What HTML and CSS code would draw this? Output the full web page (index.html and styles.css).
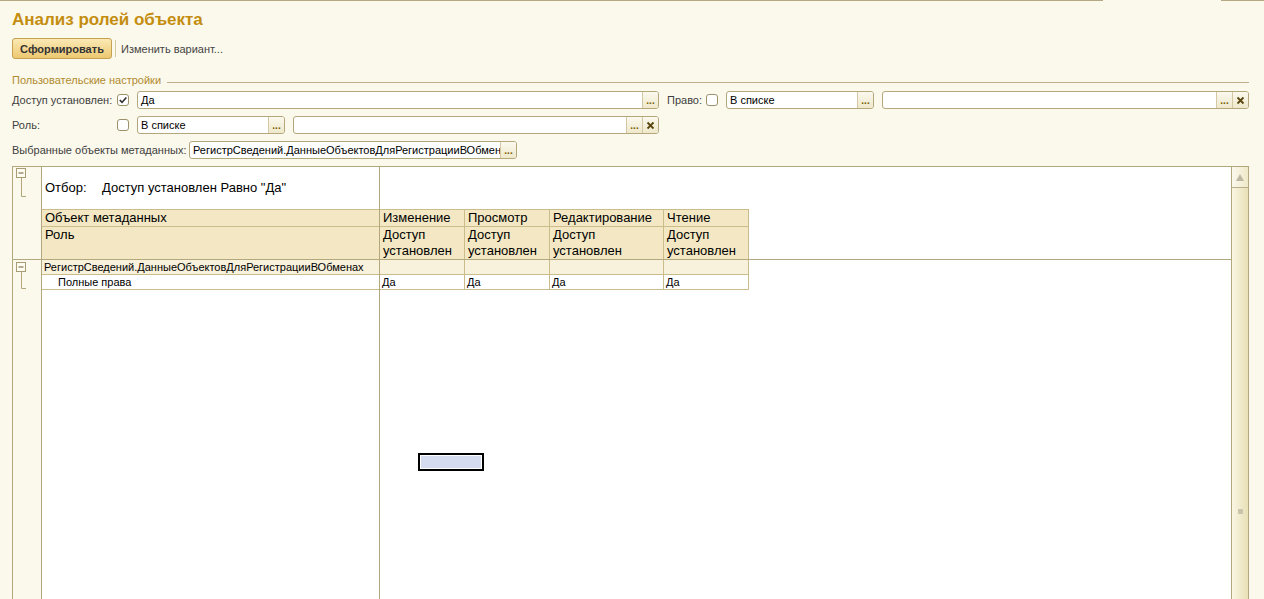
FILE: index.html
```html
<!DOCTYPE html>
<html lang="ru">
<head>
    <meta charset="UTF-8">
    <title>Анализ ролей объекта</title>
    <link rel="stylesheet" href="styles.css">
</head>
<body>
    <!-- window top edge -->
    <div class="topline"><span class="tl-left"></span><span class="tl-right"></span></div>

    <div class="page">
        <h1 class="title">Анализ ролей объекта</h1>

        <!-- Command bar -->
        <div class="toolbar">
            <button class="btn-main">Сформировать</button>
            <span class="tb-sep"></span>
            <span class="tb-link">Изменить вариант...</span>
        </div>

        <!-- User settings -->
        <div class="group-head">
            <span class="group-title">Пользовательские настройки</span>
            <span class="group-line"></span>
        </div>

        <div class="frow">
            <span class="flabel">Доступ установлен:</span>
            <span class="check"><svg width="10" height="10" viewBox="0 0 10 10"><path d="M1.8 5 L4 7.4 L8.3 2.4" fill="none" stroke="#2e2e2e" stroke-width="1.6"/></svg></span>
            <div class="field w-access"><span class="val">Да</span><span class="fbtn">...</span></div>
            <span class="flabel-right">Право:</span>
            <span class="check"></span>
            <div class="field w-list"><span class="val">В списке</span><span class="fbtn">...</span></div>
            <div class="field grow"><span class="val"></span><span class="fbtn">...</span><span class="fbtn clr"><svg width="9" height="9" viewBox="0 0 9 9"><path d="M1.5 1.5 L7.5 7.5 M7.5 1.5 L1.5 7.5" stroke="#5a470f" stroke-width="1.8"/></svg></span></div>
        </div>

        <div class="frow">
            <span class="flabel">Роль:</span>
            <span class="check"></span>
            <div class="field w-list"><span class="val">В списке</span><span class="fbtn">...</span></div>
            <div class="field w-role"><span class="val"></span><span class="fbtn">...</span><span class="fbtn clr"><svg width="9" height="9" viewBox="0 0 9 9"><path d="M1.5 1.5 L7.5 7.5 M7.5 1.5 L1.5 7.5" stroke="#5a470f" stroke-width="1.8"/></svg></span></div>
        </div>

        <div class="frow">
            <span class="flabel-meta">Выбранные объекты метаданных:</span>
            <div class="field w-meta"><span class="val">РегистрСведений.ДанныеОбъектовДляРегистрацииВОбменах</span><span class="fbtn">...</span></div>
        </div>

        <!-- Report spreadsheet -->
        <div class="report">
            <div class="gutter">
                <div class="gutter-top">
                    <svg width="28" height="32" viewBox="0 0 28 32">
                        <path d="M8.5 11 V29.5 H13" fill="none" stroke="#b3a77e"/>
                        <rect x="3.5" y="1.5" width="9" height="9" fill="#fdfbf2" stroke="#a89c74"/>
                        <path d="M5.5 6 H10.5" stroke="#6b5c2c"/>
                    </svg>
                </div>
                <div class="gutter-bottom">
                    <svg width="28" height="32" viewBox="0 0 28 32">
                        <path d="M8.5 12 V28.5 H13" fill="none" stroke="#b3a77e"/>
                        <rect x="3.5" y="2.5" width="9" height="9" fill="#fdfbf2" stroke="#a89c74"/>
                        <path d="M5.5 7 H10.5" stroke="#6b5c2c"/>
                    </svg>
                </div>
            </div>

            <div class="sheet">
                <div class="pane pane-tl">
                    <div class="filter"><span class="filter-key">Отбор:</span><span>Доступ установлен Равно "Да"</span></div>
                    <div class="hcell h1">Объект метаданных</div>
                    <div class="hcell h2">Роль</div>
                </div>
                <div class="pane pane-tr">
                    <div class="hrow h1">
                        <div class="hc">Изменение</div>
                        <div class="hc">Просмотр</div>
                        <div class="hc wide">Редактирование</div>
                        <div class="hc">Чтение</div>
                    </div>
                    <div class="hrow h2">
                        <div class="hc">Доступ<br>установлен</div>
                        <div class="hc">Доступ<br>установлен</div>
                        <div class="hc wide">Доступ<br>установлен</div>
                        <div class="hc">Доступ<br>установлен</div>
                    </div>
                </div>
                <div class="pane pane-bl">
                    <div class="drow grp">РегистрСведений.ДанныеОбъектовДляРегистрацииВОбменах</div>
                    <div class="drow det">Полные права</div>
                </div>
                <div class="pane pane-br">
                    <div class="crow grp">
                        <div class="dc"></div>
                        <div class="dc"></div>
                        <div class="dc wide"></div>
                        <div class="dc"></div>
                    </div>
                    <div class="crow">
                        <div class="dc">Да</div>
                        <div class="dc">Да</div>
                        <div class="dc wide">Да</div>
                        <div class="dc">Да</div>
                    </div>
                    <!-- current cell -->
                    <div class="cursor"></div>
                </div>
            </div>

            <div class="vscroll">
                <div class="sb-up"><svg width="8" height="7" viewBox="0 0 8 7"><path d="M4 0 L8 7 H0 Z" fill="#bdb8a2"/></svg></div>
                <div class="sb-grip"></div>
            </div>
        </div>
    </div>
</body>
</html>
```

FILE: styles.css
```css
/* Basic Reset */
* {
    margin: 0;
    padding: 0;
    box-sizing: border-box;
}

body {
    background: #fbf9eb;
    font-family: "Liberation Sans", Arial, sans-serif;
    font-size: 11px;
    color: #404040;
    height: 599px;
    overflow: hidden;
}

/* Window top edge */
.topline {
    display: flex;
    height: 1px;
}

.topline .tl-left {
    width: 1103px;
    background: #b5a983;
}

.topline .tl-right {
    flex: 1;
    margin-left: 118px;
    background: #b5a983;
}

.page {
    padding: 0 15px 0 12px;
}

/* Title */
.title {
    margin-top: 9px;
    font-size: 17px;
    line-height: 20px;
    font-weight: bold;
    color: #c48d10;
}

/* Command bar */
.toolbar {
    display: flex;
    align-items: center;
    height: 21px;
    margin-top: 8px;
}

.btn-main {
    width: 100px;
    height: 21px;
    border: 1px solid #c6a14f;
    border-radius: 3px;
    background: linear-gradient(#fbe9b5, #edc871);
    font: bold 11px "Liberation Sans", Arial, sans-serif;
    color: #333;
}

.tb-sep {
    width: 1px;
    height: 17px;
    margin: 0 5px 0 3px;
    background: #d4c9a2;
}

.tb-link {
    color: #444;
}

/* Settings group */
.group-head {
    display: flex;
    height: 14px;
    margin-top: 14px;
    line-height: 14px;
}

.group-title {
    color: #b08a30;
    margin-right: 6px;
}

.group-line {
    flex: 1;
    height: 1px;
    margin-top: 9px;
    background: #bbb08a;
}

.frow {
    display: flex;
    align-items: center;
    height: 18px;
    margin-top: 7px;
}

.group-head + .frow {
    margin-top: 4px;
}

.flabel {
    width: 105px;
}

.flabel-right {
    width: 39px;
    margin-left: 8px;
}

.flabel-meta {
    width: 177px;
}

.check {
    display: flex;
    align-items: center;
    justify-content: center;
    width: 12px;
    height: 12px;
    margin-right: 8px;
    border: 1px solid #9d916c;
    border-radius: 3px;
    background: #fff;
}

/* Input fields */
.field {
    display: flex;
    height: 18px;
    border: 1px solid #b5a77c;
    border-radius: 3px;
    background: #fff;
    overflow: hidden;
}

.field .val {
    flex: 1;
    padding-left: 3px;
    line-height: 16px;
    color: #000;
    white-space: nowrap;
    overflow: hidden;
}

.field .fbtn {
    display: flex;
    align-items: center;
    justify-content: center;
    width: 16px;
    padding-top: 1px;
    border-left: 1px solid #d3c8a3;
    background: linear-gradient(#fbf9ee, #efe8cb);
    color: #7a5c00;
    font-size: 10px;
    font-weight: bold;
    line-height: 16px;
}

.field .clr {
    padding-top: 0;
}

.w-access {
    width: 522px;
}

.w-list {
    width: 148px;
    margin-right: 8px;
}

.w-role {
    width: 366px;
}

.w-meta {
    width: 328px;
}

.grow {
    flex: 1;
}

/* Report */
.report {
    display: grid;
    grid-template-columns: 29px 1fr 17px;
    height: 460px;
    margin-top: 7px;
    border: 1px solid #b3a77e;
    background: #fff;
}

.gutter {
    display: grid;
    grid-template-rows: 93px 1fr;
    border-right: 1px solid #b3a77e;
    background: #fbf9eb;
}

.gutter-top {
    border-bottom: 1px solid #b3a77e;
}

.gutter svg {
    display: block;
}

.sheet {
    display: grid;
    grid-template-columns: 338px 1fr;
    grid-template-rows: 93px 1fr;
    color: #000;
}

.pane-tl {
    border-right: 1px solid #b3a77e;
    border-bottom: 1px solid #b3a77e;
}

.pane-tr {
    padding-top: 42px;
    border-bottom: 1px solid #b3a77e;
}

.pane-bl {
    border-right: 1px solid #b3a77e;
}

.pane-br {
    position: relative;
}

.filter {
    height: 42px;
    padding: 13px 0 0 3px;
    font-size: 13px;
    line-height: 16px;
}

.filter-key {
    display: inline-block;
    width: 57px;
}

.hcell,
.hc {
    padding-left: 3px;
    border-top: 1px solid #cbbc8c;
    background: #f3e8c3;
    font-size: 13px;
    line-height: 16px;
}

.h1 {
    height: 17px;
}

.h2 {
    height: 33px;
}

.hrow,
.crow {
    display: flex;
}

.hc,
.dc {
    width: 85px;
    border-right: 1px solid #cbbc8c;
}

.hc.wide,
.dc.wide {
    width: 114px;
}

.drow {
    height: 15px;
    border-bottom: 1px solid #cbbc8c;
    line-height: 14px;
    white-space: nowrap;
}

.dc {
    height: 15px;
    padding-left: 2px;
    border-bottom: 1px solid #cbbc8c;
    line-height: 14px;
}

.drow.grp {
    padding-left: 2px;
}

.drow.det {
    padding-left: 16px;
}

.drow.grp,
.crow.grp .dc {
    background: #f8f1db;
}

.cursor {
    position: absolute;
    left: 38px;
    top: 193px;
    width: 66px;
    height: 18px;
    border: 2px solid #000;
    background: #d6dcef;
    box-shadow: inset 0 0 0 1px #fff;
}

/* Vertical scrollbar */
.vscroll {
    display: flex;
    flex-direction: column;
    align-items: center;
    border-left: 1px solid #b3a77e;
    background: linear-gradient(to right, #f9f6e4, #e9e0b6);
}

.sb-up {
    display: flex;
    align-items: center;
    justify-content: center;
    width: 100%;
    height: 21px;
    border-bottom: 1px solid #b9ae88;
    background: linear-gradient(to right, #fbf9ee, #efe8c8);
}

.sb-grip {
    width: 5px;
    height: 5px;
    margin-top: 321px;
    border-radius: 1px;
    background: #c8c3ab;
}
```
